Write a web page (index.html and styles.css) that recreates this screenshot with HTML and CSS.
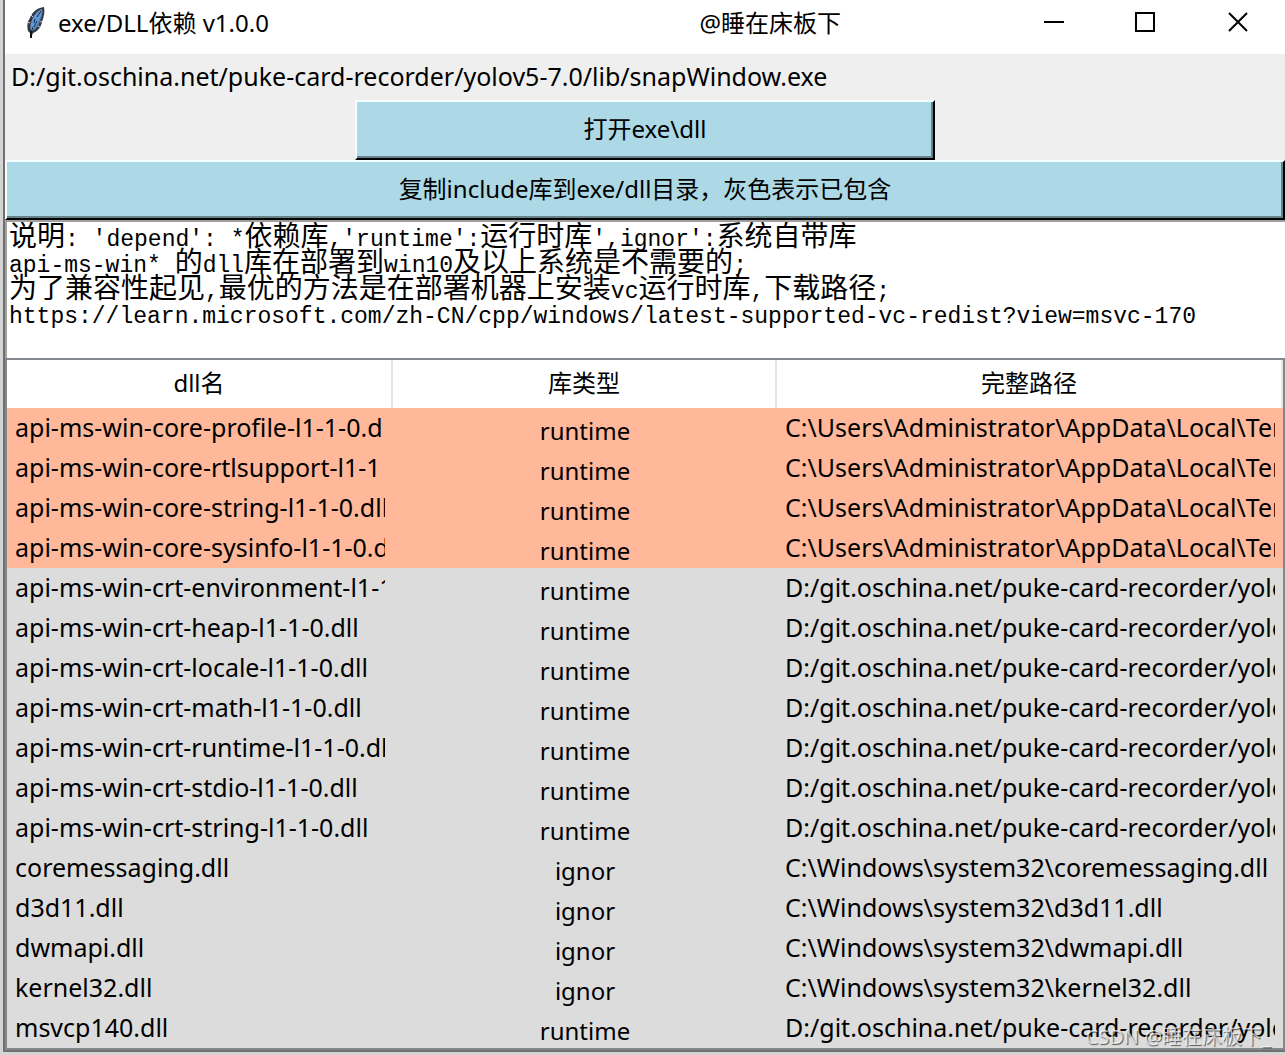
FILE: index.html
```html
<!DOCTYPE html>
<html lang="zh-CN">
<head>
<meta charset="utf-8">
<title>exe/DLL依赖 v1.0.0</title>
<link rel="stylesheet" href="styles.css">
</head>
<body>
<main class="window">
  <header class="titlebar">
    <div class="caption">
      <svg class="feather" width="20" height="32" viewBox="0 0 20 32" aria-hidden="true">
        <path d="M18 0C11 1 6 5 4 11c-3 4-3 9-2 13l2 2 1 5 2-5c5-2 8-6 9-11 2-5 3-11 2-15z" fill="#33383e"/>
        <path d="M16 2C11 4 8 8 6 13c-2 4-2 8-1 11 5-2 8-6 9-11 2-4 3-8 2-11z" fill="#5f97d6"/>
        <path d="M16 3c-1 8-4 15-10 21 5-2 7-6 8-11 2-4 2-7 2-10z" fill="#4a7ab8"/>
        <path d="M15 4l-4 6M9 12l-1 4M11 14l-3 6M7 20l-2 6" fill="none" stroke="#1d2a3a" stroke-width="1"/>
        <path d="M5 24v7" stroke="#111" stroke-width="2"/>
        <path d="M1 15l3 1M16 14l-2 1M5 8l2 2M14 20l-2-1" stroke="#c6ced6" stroke-width="1"/>
      </svg>
      <h1 class="title">exe/DLL依赖 v1.0.0</h1>
    </div>
    <span class="author">@睡在床板下</span>
    <div class="controls">
      <button class="control" type="button" aria-label="最小化"><svg width="22" height="22" viewBox="0 0 22 22"><path d="M1 10h20" stroke="#000" stroke-width="2"/></svg></button>
      <button class="control" type="button" aria-label="最大化"><svg width="22" height="22" viewBox="0 0 22 22"><path d="M1 1h18v18h-18z" fill="none" stroke="#000" stroke-width="2"/></svg></button>
      <button class="control" type="button" aria-label="关闭"><svg width="22" height="22" viewBox="0 0 22 22"><path d="M2 1l18 18M20 1L2 19" stroke="#000" stroke-width="2"/></svg></button>
    </div>
  </header>

  <section class="tools">
    <p class="path">D:/git.oschina.net/puke-card-recorder/yolov5-7.0/lib/snapWindow.exe</p>
    <button class="action action-open" type="button">打开exe\dll</button>
    <button class="action" type="button">复制include库到exe/dll目录，灰色表示已包含</button>
  </section>

  <section class="notes">
    <p><b>说明</b>: 'depend': *<b>依赖库</b>,'runtime':<b>运行时库</b>',ignor':<b>系统自带库</b></p>
    <p>api-ms-win* <b>的</b>dll<b>库在部署到</b>win10<b>及以上系统是不需要的</b>;</p>
    <p><b>为了兼容性起见</b>,<b>最优的方法是在部署机器上安装</b>vc<b>运行时库</b>,<b>下载路径</b>;</p>
    <p>https://learn.microsoft.com/zh-CN/cpp/windows/latest-supported-vc-redist?view=msvc-170</p>
  </section>

  <div class="tree">
    <table class="list">
      <colgroup><col class="col-name"><col class="col-type"><col></colgroup>
      <thead><tr><th>dll名</th><th>库类型</th><th>完整路径</th></tr></thead>
      <tbody>
        <tr class="missing"><td>api-ms-win-core-profile-l1-1-0.d</td><td>runtime</td><td>C:\Users\Administrator\AppData\Local\Tem</td></tr>
        <tr class="missing"><td>api-ms-win-core-rtlsupport-l1-1</td><td>runtime</td><td>C:\Users\Administrator\AppData\Local\Tem</td></tr>
        <tr class="missing"><td>api-ms-win-core-string-l1-1-0.dll</td><td>runtime</td><td>C:\Users\Administrator\AppData\Local\Tem</td></tr>
        <tr class="missing"><td>api-ms-win-core-sysinfo-l1-1-0.d</td><td>runtime</td><td>C:\Users\Administrator\AppData\Local\Tem</td></tr>
        <tr><td>api-ms-win-crt-environment-l1-1</td><td>runtime</td><td>D:/git.oschina.net/puke-card-recorder/yolo</td></tr>
        <tr><td>api-ms-win-crt-heap-l1-1-0.dll</td><td>runtime</td><td>D:/git.oschina.net/puke-card-recorder/yolo</td></tr>
        <tr><td>api-ms-win-crt-locale-l1-1-0.dll</td><td>runtime</td><td>D:/git.oschina.net/puke-card-recorder/yolo</td></tr>
        <tr><td>api-ms-win-crt-math-l1-1-0.dll</td><td>runtime</td><td>D:/git.oschina.net/puke-card-recorder/yolo</td></tr>
        <tr><td>api-ms-win-crt-runtime-l1-1-0.dl</td><td>runtime</td><td>D:/git.oschina.net/puke-card-recorder/yolo</td></tr>
        <tr><td>api-ms-win-crt-stdio-l1-1-0.dll</td><td>runtime</td><td>D:/git.oschina.net/puke-card-recorder/yolo</td></tr>
        <tr><td>api-ms-win-crt-string-l1-1-0.dll</td><td>runtime</td><td>D:/git.oschina.net/puke-card-recorder/yolo</td></tr>
        <tr><td>coremessaging.dll</td><td>ignor</td><td>C:\Windows\system32\coremessaging.dll</td></tr>
        <tr><td>d3d11.dll</td><td>ignor</td><td>C:\Windows\system32\d3d11.dll</td></tr>
        <tr><td>dwmapi.dll</td><td>ignor</td><td>C:\Windows\system32\dwmapi.dll</td></tr>
        <tr><td>kernel32.dll</td><td>ignor</td><td>C:\Windows\system32\kernel32.dll</td></tr>
        <tr><td>msvcp140.dll</td><td>runtime</td><td>D:/git.oschina.net/puke-card-recorder/yolo</td></tr>
      </tbody>
    </table>
    <span class="watermark">CSDN @睡在床板下_</span>
  </div>
</main>
</body>
</html>
```
FILE: styles.css
```css
* { box-sizing: border-box; }

body {
  margin: 0;
  padding: 0 0 3px 3px;
  background: #d4d4d4;
  color: #000;
  font: 24px/32px "Noto Sans", "Noto Sans CJK SC", sans-serif;
}

h1, p { margin: 0; font-size: inherit; font-weight: 400; }

button { margin: 0; padding: 0; font: inherit; color: inherit; }

.window {
  border: solid #707070;
  border-width: 0 0 2px 2px;
  background: #efefef;
}

.titlebar {
  display: grid;
  grid-template-columns: 54.3% 1fr auto;
  align-items: center;
  height: 54px;
  padding: 0 1px 8px 0;
  background: #fff;
}

.caption { display: flex; align-items: center; gap: 12px; padding-left: 21px; }
.title, .author { white-space: nowrap; }
.controls { display: flex; }

.control {
  display: flex;
  align-items: center;
  justify-content: center;
  width: 92px;
  height: 44px;
  border: 0;
  background: none;
}

.tools { display: flex; flex-direction: column; }
.path { padding: 6px 6px 8px; font-size: 25px; white-space: nowrap; overflow: hidden; }

.action {
  height: 60px;
  padding-bottom: 2px;
  border: 2px solid #000;
  border-top-color: #f4ffff;
  border-left-color: #f4ffff;
  background: #add8e6;
  box-shadow: inset -2px -2px #68828a;
}

.action-open { align-self: center; width: 45.3%; }

.notes {
  height: 138px;
  padding: 4px 2px;
  border: solid #a0a0a0;
  border-width: 2px 0 0 2px;
  background: #fff;
  font: 23px/26px "Liberation Mono", "Noto Sans CJK SC", monospace;
  white-space: nowrap;
  overflow: hidden;
}

.notes p { height: 26px; }
.notes b { font-size: 28px; font-weight: 400; line-height: 26px; }

.tree { position: relative; border: 2px solid #828790; background: #dcdcdc; }

.list { width: 100%; table-layout: fixed; border-collapse: separate; border-spacing: 0; }
.col-name { width: 30.25%; }
.col-type { width: 30.1%; }

th {
  height: 48px;
  padding: 0 0 2px;
  border-right: 2px solid #e5e5e5;
  background: #fff;
  font-weight: 400;
}

td {
  height: 40px;
  padding: 0 0 2px;
  border: solid transparent;
  border-width: 0 8px;
  font-size: 25px;
  white-space: nowrap;
  overflow: hidden;
}

td:nth-child(2) { padding: 6px 0 0; font-size: 24px; text-align: center; }
.missing { background: #ffb899; }

.watermark {
  position: absolute;
  right: 12px;
  bottom: -2px;
  font-size: 20px;
  line-height: 26px;
  color: rgba(255, 255, 255, .7);
  text-shadow: 1px 1px 1px rgba(0, 0, 0, .6);
}
```
